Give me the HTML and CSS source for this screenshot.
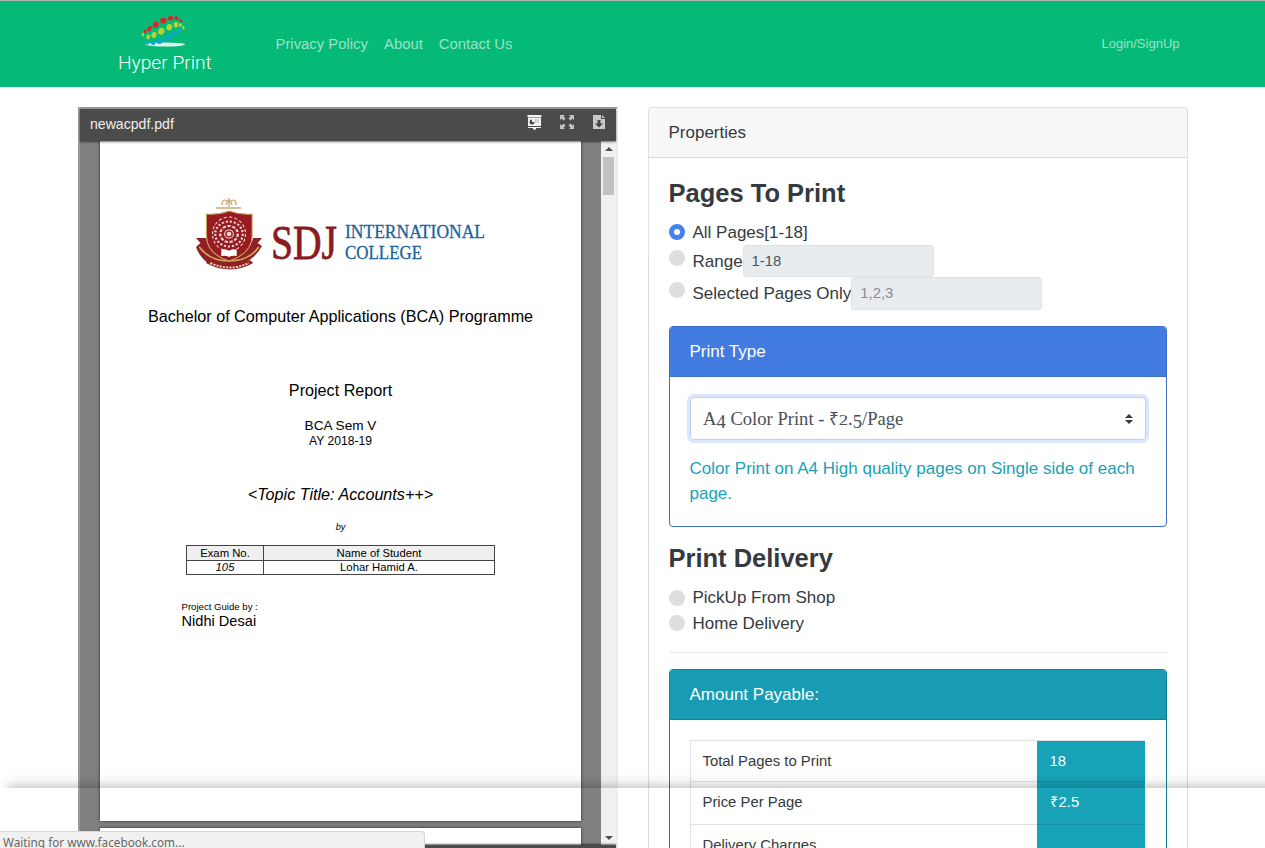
FILE: index.html
```html
<!DOCTYPE html>
<html lang="en">
<head>
<meta charset="utf-8">
<title>Hyper Print</title>
<link rel="stylesheet" href="styles.css">
</head>
<body>
<header class="navbar">
  <a class="brand">
    <svg class="brand-mark" width="50" height="36" viewBox="0 0 50 36">
      <ellipse cx="25.5" cy="30.500" rx="19.5" ry="2" fill="#dff3ea"/>
      <g fill="#ed1c24">
        <ellipse cx="5" cy="17.500" rx="1.4" ry="2.1" transform="rotate(20 5 17.500)"/>
        <ellipse cx="9.500" cy="14.700" rx="2" ry="2.7" transform="rotate(25 9.500 14.700)"/>
        <ellipse cx="15.800" cy="10.700" rx="2.800" ry="3.2" transform="rotate(25 15.800 10.700)"/>
        <ellipse cx="23.300" cy="6.600" rx="3.100" ry="2.900"/>
        <ellipse cx="30.700" cy="4.300" rx="2.800" ry="2.300"/>
        <ellipse cx="36.700" cy="4.300" rx="2.100" ry="1.700" transform="rotate(35 36.700 4.300)"/>
        <ellipse cx="41" cy="7" rx="1.800" ry="1.200" transform="rotate(50 41 7)"/>
      </g>
      <g fill="#b5d334">
        <ellipse cx="3" cy="20.500" rx="1.200" ry="2"/>
        <ellipse cx="8.200" cy="23" rx="1.900" ry="2.400"/>
        <ellipse cx="14" cy="21" rx="2.600" ry="3.100" transform="rotate(20 14 21)"/>
        <ellipse cx="21.300" cy="17.300" rx="3.100" ry="3.500" transform="rotate(25 21.300 17.300)"/>
        <ellipse cx="29.300" cy="13.300" rx="2.900" ry="3.200" transform="rotate(20 29.300 13.300)"/>
        <ellipse cx="36" cy="10.700" rx="2.300" ry="2.700"/>
        <ellipse cx="40.500" cy="11" rx="1.600" ry="2.100"/>
        <ellipse cx="43.500" cy="13.800" rx="1.100" ry="1.900" transform="rotate(-20 43.500 13.800)"/>
      </g>
      <g fill="#0aa5d8">
        <ellipse cx="7.500" cy="28.500" rx="2.100" ry="1.700" transform="rotate(35 7.500 28.500)"/>
        <ellipse cx="13.200" cy="29" rx="2.300" ry="2.100"/>
        <ellipse cx="19.500" cy="27.300" rx="2.800" ry="2.700"/>
        <ellipse cx="27.500" cy="23.700" rx="2.800" ry="3.200" transform="rotate(30 27.500 23.700)"/>
        <ellipse cx="34.500" cy="19.300" rx="2.400" ry="2.900" transform="rotate(25 34.500 19.300)"/>
        <ellipse cx="40" cy="16.400" rx="1.600" ry="2.200" transform="rotate(20 40 16.400)"/>
      </g>
    </svg>
    <span class="brand-name">Hyper Print</span>
  </a>
  <nav class="links"><a>Privacy Policy</a><a>About</a><a>Contact Us</a></nav>
  <a class="login">Login/SignUp</a>
</header>

<main class="columns">
  <section class="viewer">
    <div class="viewer-bar">
      <span class="viewer-title">newacpdf.pdf</span>
      <svg width="16" height="16" viewBox="0 0 16 16"><path fill="#f2f2f2" d="M.5 1h14v2H.5zM1 3.500h13v8.500H1zM1 13h13v1H1zM6 14h3v1.500H6z"/><path d="M2.500 8A2.500 2.500 0 0 1 5 5.500V8h2.500a2.500 2.500 0 0 1-5 0z" fill="#4a4a4a"/><path d="M8 5.500h1.500v1H8zM10.500 5.500H12v1h-1.500zM8 7.500h1.500v1H8zM10.500 7.500H12v1h-1.500z" fill="#999"/></svg>
      <svg width="16" height="16" viewBox="0 0 16 16"><g fill="#c4c4c4"><path d="M1 1h5L4.500 2.500 6.500 4.500l-2 2-2-2L1 6z"/><path d="M15 1v5l-1.500-1.500-2 2-2-2 2-2L10 1z"/><path d="M1 15v-5l1.500 1.500 2-2 2 2-2 2L6 15z"/><path d="M15 15h-5l1.500-1.500-2-2 2-2 2 2L15 10z"/></g></svg>
      <svg width="16" height="16" viewBox="0 0 16 16"><path fill="#c9c9c9" d="M2 1h8v4h4v10H2zM11 1l3 3h-3z"/><path fill="#444" d="M6.500 6h3v3.500H12L8 13.500 4 9.500h2.500z"/></svg>
    </div>
    <div class="viewer-body">
      <div class="pages">
        <article class="page">
          <svg class="college" width="310" height="90" viewBox="0 0 310 90">
            <path d="M20 18h25M30 15q3-9 6 0M26 15q0-7 5-4M40 15q0-7-5-4M33 8v9" fill="none" stroke="#c8ac70" stroke-width="1.400"/>
            <g transform="translate(-2.200 0) scale(1.100 1)">
              <path d="M2 48l9 0c2 8 8 16 17 19h9c9-3 15-11 17-19l8 0-4 5 4 3c-6 12-16 18-24 22H25C14 76 6 69 2 57l4-4z" fill="#8f2025"/>
              <path d="M5 57c8 12 18 14 27 14s20-3 27-14" fill="none" stroke="#d1ad59" stroke-width="1.500"/>
              <path d="M11.500 24q11 1 20.500-3 10 4 21 3v22c0 13-10 21-21 25-11-4-20.500-12-20.500-25z" fill="#981b22" stroke="#c8a45d"/>
              <g fill="none" stroke="#ead9d3"><circle cx="32" cy="44" r="4"/><circle cx="32" cy="44" r="8" stroke-width="2" stroke-dasharray="3 1.500"/><circle cx="32" cy="44" r="12.500" stroke-width="2" stroke-dasharray="2 1.700"/><ellipse cx="32" cy="44" rx="15" ry="17" stroke-dasharray="3 2"/></g>
              <circle cx="32" cy="44" r="2.200" fill="#ead9d3"/>
              <path d="M25 60q4-2 7 1 3-3 7-1v6q-4-1-7 1-3-2-7-1z" fill="#fff"/>
              <path d="M14 70q18 11 37 0l3 3q-21 13-43 0z" fill="#8f2025"/>
              <path d="M15 73q18 9 35 0" fill="none" stroke="#e8cbb5" stroke-width="2" stroke-dasharray="2 1"/>
            </g>
            <text class="sdj" x="75" y="69" textLength="66" lengthAdjust="spacingAndGlyphs">SDJ</text>
            <text class="intl" x="149" y="48" textLength="140" lengthAdjust="spacingAndGlyphs">INTERNATIONAL</text>
            <text class="intl" x="149" y="69" textLength="77" lengthAdjust="spacingAndGlyphs">COLLEGE</text>
          </svg>
          <p class="programme">Bachelor of Computer Applications (BCA) Programme</p>
          <p class="report">Project Report</p>
          <p class="sem">BCA Sem V</p>
          <p class="year">AY 2018-19</p>
          <p class="topic">&lt;Topic Title: Accounts++&gt;</p>
          <p class="by">by</p>
          <table class="students">
            <tr class="head"><td class="exam">Exam No.</td><td>Name of Student</td></tr>
            <tr><td class="exam"><i>105</i></td><td>Lohar Hamid A.</td></tr>
          </table>
          <p class="guide">Project Guide by :</p>
          <p class="guide-name">Nidhi Desai</p>
        </article>
        <article class="page next"></article>
      </div>
      <div class="scroll">
        <svg width="8" height="4" viewBox="0 0 8 4"><path d="M4 0l4 4H0z" fill="#505050"/></svg>
        <div class="thumb"></div>
        <svg class="down" width="8" height="4" viewBox="0 0 8 4"><path d="M0 0h8L4 4z" fill="#505050"/></svg>
      </div>
    </div>
    <div class="viewer-foot"></div>
  </section>

  <section class="card props">
    <div class="card-head">Properties</div>
    <div class="card-body">
      <h2>Pages To Print</h2>
      <div class="row"><span class="radio on"></span>All Pages[1-18]</div>
      <div class="row field range"><span class="radio"></span><span>Range</span><span class="input">1-18</span></div>
      <div class="row field"><span class="radio"></span><span>Selected Pages Only</span><span class="input hint">1,2,3</span></div>

      <div class="card type">
        <div class="card-head">Print Type</div>
        <div class="card-body">
          <div class="select">
            <span class="choice">A<span class="low">4</span> Color Print - <span class="rupee">₹</span><span class="mid">2</span>.<span class="low">5</span>/Page</span>
            <svg width="8" height="10" viewBox="0 0 8 10"><path d="M4 0l4 4H0zM0 6h8l-4 4z" fill="#343a40"/></svg>
          </div>
          <p class="note">Color Print on A4 High quality pages on Single side of each page.</p>
        </div>
      </div>

      <h2 class="delivery">Print Delivery</h2>
      <div class="row"><span class="radio"></span>PickUp From Shop</div>
      <div class="row last"><span class="radio"></span>Home Delivery</div>
      <hr>
      <div class="card amount">
        <div class="card-head">Amount Payable:</div>
        <div class="card-body">
          <div class="bill">
            <div class="line"><span>Total Pages to Print</span><b>18</b></div>
            <div class="line tall"><span>Price Per Page</span><b>₹2.5</b></div>
            <div class="line tall"><span>Delivery Charges</span><b></b></div>
          </div>
        </div>
      </div>
    </div>
  </section>
</main>
<div class="footer-shadow"></div>
<div class="status">Waiting for www.facebook.com...</div>
</body>
</html>
```
FILE: styles.css
```css
* { box-sizing: border-box; }
html, body { height: 848px; overflow: hidden; }
body {
  margin: 0;
  background: #fff;
  color: #343a40;
  font: 17px/25.5px "Liberation Sans", Arial, sans-serif;
}
p, h2 { margin: 0; }

.navbar {
  display: flex;
  align-items: center;
  height: 87px;
  padding: 0 85.5px 0 118px;
  border-top: 1px solid #a9b5b0;
  background: #04ba76;
  color: rgba(255, 255, 255, .6);
  font-size: 14.875px;
}
.brand { width: 157.5px; height: 62px; display: flex; flex-direction: column; }
.brand-mark { margin: 1px 0 0 22px; flex: none; }
.brand-name { color: #fff; font: 300 19.200px/26px Roboto, sans-serif; white-space: nowrap; }
.links { display: flex; gap: 16px; flex: 1; padding-top: 1px; }
.login { font-size: 13px; }

.columns { display: flex; gap: 30px; padding: 20px 77px 0 78px; height: 761px; }
.viewer {
  display: flex;
  flex-direction: column;
  width: 540px;
  height: 741px;
  border: solid #9a9a9a;
  border-width: 2px 2px 0;
  border-right-color: #eee;
}
.viewer-bar {
  display: flex;
  flex: none;
  gap: 16px;
  height: 32px;
  padding: 5px 9px 0 10px;
  background: #4b4b4b;
  color: #eee;
  position: relative;
  box-shadow: 0 1px 2px rgba(0, 0, 0, .55);
}
.viewer-title { flex: 1; font-size: 14.100px; line-height: 21px; }
.viewer-body { display: flex; height: 704px; background: #808080; }
.pages { flex: 1; padding: 0 20px; overflow: hidden; }
.page {
  height: 680px;
  padding-top: 49px;
  background: #fff;
  color: #000;
  text-align: center;
  box-shadow: 0 0 3px rgba(0, 0, 0, .7);
}
.page.next { margin-top: 7px; height: 100px; }
.page p { white-space: nowrap; }
.college { display: block; margin-left: 96px; }
.sdj { font: 48px "Liberation Serif", serif; fill: #8a1b20; stroke: #8a1b20; stroke-width: .8px; }
.intl { font: 19.500px "Liberation Serif", serif; fill: #17639b; stroke: #17639b; stroke-width: .3px; }
.programme { margin-top: 26px; font-size: 16.160px; line-height: 20px; }
.report { margin-top: 54px; font-size: 16.160px; line-height: 20px; }
.sem { margin-top: 18px; font-size: 13.600px; line-height: 16px; }
.year { font-size: 12.100px; line-height: 14px; }
.topic { margin-top: 36px; font-size: 16.160px; line-height: 20px; font-style: italic; }
.by { margin-top: 17px; font-size: 9.200px; line-height: 12px; font-style: italic; }
.students {
  width: 309px;
  margin: 12px 0 0 86px;
  border-collapse: collapse;
  font-size: 11.300px;
  line-height: 13px;
}
.students td { height: 14px; padding: 0; border: 1px solid #444; }
.students .head td { height: 15px; padding-top: 1px; }
.students .exam { width: 77px; }
.head { background: #efefef; }
.page .guide { margin: 26px 0 0 81.5px; font-size: 9.600px; line-height: 12px; text-align: left; }
.guide-name { padding-left: 81.5px; font-size: 14.600px; line-height: 16px; text-align: left; }
.scroll { display: flex; flex-direction: column; align-items: center; width: 15px; padding: 6px 0 5px; background: #f1f1f1; }
.thumb { width: 11px; height: 38px; margin-top: 6px; background: #c1c1c1; }
.down { margin-top: auto; }
.viewer-foot { height: 3px; background: #4b4b4b; box-shadow: 0 -1px 2px rgba(0, 0, 0, .55); position: relative; }

.card { border: 1px solid rgba(0, 0, 0, .125); border-radius: 4px; }
.card-head { height: 50px; padding: 12px 19.5px; background: #f7f7f7; border-bottom: 1px solid rgba(0, 0, 0, .125); border-radius: 3px 3px 0 0; }
.card-body { padding: 20px; }
.props { width: 540px; height: 741px; border-bottom: 0; border-radius: 4px 4px 0 0; overflow: hidden; }
h2 { height: 41px; margin-left: -.5px; font-size: 25.500px; line-height: 30px; }
.row { display: flex; align-items: center; height: 26px; padding-top: 1px; }
.radio { flex: none; width: 16px; height: 16px; margin-right: 7.5px; border-radius: 50%; background: #dedede; }
.radio.on { margin-bottom: 2px; border: 5px solid #4582ec; background: #fff; }
.last .radio { margin-bottom: 2px; }
.field { height: 32px; padding: 0; }
.field + .field { height: 33px; }
.range > span:nth-child(2) { padding-top: 1px; }
.field .radio { margin-bottom: 6px; }
.field + .field .radio { margin-bottom: 7px; }
.input {
  align-self: stretch;
  width: 191px;
  padding: 0 8px;
  border: 1px solid #dfe3e6;
  border-radius: 3px;
  background: #e9ecef;
  color: #495057;
  font-size: 14.875px;
  line-height: 31px;
}
.hint { color: #868e96; }
.type { margin-top: 16px; height: 201px; border-color: #3c70cb; }
.type .card-head { background: #427ce0; border-color: #3c70cb; color: #fff; }
.select {
  display: flex;
  align-items: center;
  justify-content: space-between;
  height: 43px;
  padding: 0 12px 0 12px;
  border: 1px solid #b9d0f7;
  border-radius: 4px;
  box-shadow: 0 0 0 3px #dae6fb;
  color: #495057;
}
.choice { font: 18.600px/40px "Liberation Serif", serif; white-space: nowrap; }
.choice span { display: inline-block; line-height: 20px; }
.low { transform: translateY(3px); }
.mid { transform: scaleY(.8); transform-origin: 50% 76%; }
.choice .rupee { font-family: "Noto Sans", sans-serif; font-size: 17px; }
.note { margin: 16px 0 0 -.5px; color: #17a2b8; line-height: 25px; }
h2.delivery { margin-top: 16px; height: 41px; }
hr { margin: 16px 0; border: 0; border-top: 1px solid rgba(0, 0, 0, .1); }
.amount { height: 300px; border-color: #138496; }
.amount .card-head { background: #179cb4; border-color: #138496; color: #fff; }
.bill { width: 455px; border: solid #dee2e6; border-width: 1px 0 0 1px; font-size: 14.875px; }
.line { display: flex; height: 41px; line-height: 40px; }
.tall { height: 43px; line-height: 41px; }
.line span { flex: 1; padding-left: 11.5px; border-bottom: 1px solid #dee2e6; }
.line b { width: 108px; padding-left: 12.5px; background: #17a2b8; border-bottom: 1px solid #158fa3; color: #fff; font-weight: 400; }

.footer-shadow {
  position: fixed;
  left: 0;
  right: 0;
  top: 773px;
  height: 15px;
  background: linear-gradient(transparent, rgba(0, 0, 0, .04) 50%, rgba(0, 0, 0, .17));
  mask-image: linear-gradient(90deg, transparent, #000 16px);
}
.status {
  position: fixed;
  left: 0;
  top: 831px;
  width: 425px;
  height: 17px;
  overflow: hidden;
  padding-left: 3px;
  border: solid #d6d6d6;
  border-width: 1px 1px 0 0;
  border-radius: 0 4px 0 0;
  background: #f1f1f1;
  color: #666;
  font: 11.750px/21px "Noto Sans", sans-serif;
}
```
